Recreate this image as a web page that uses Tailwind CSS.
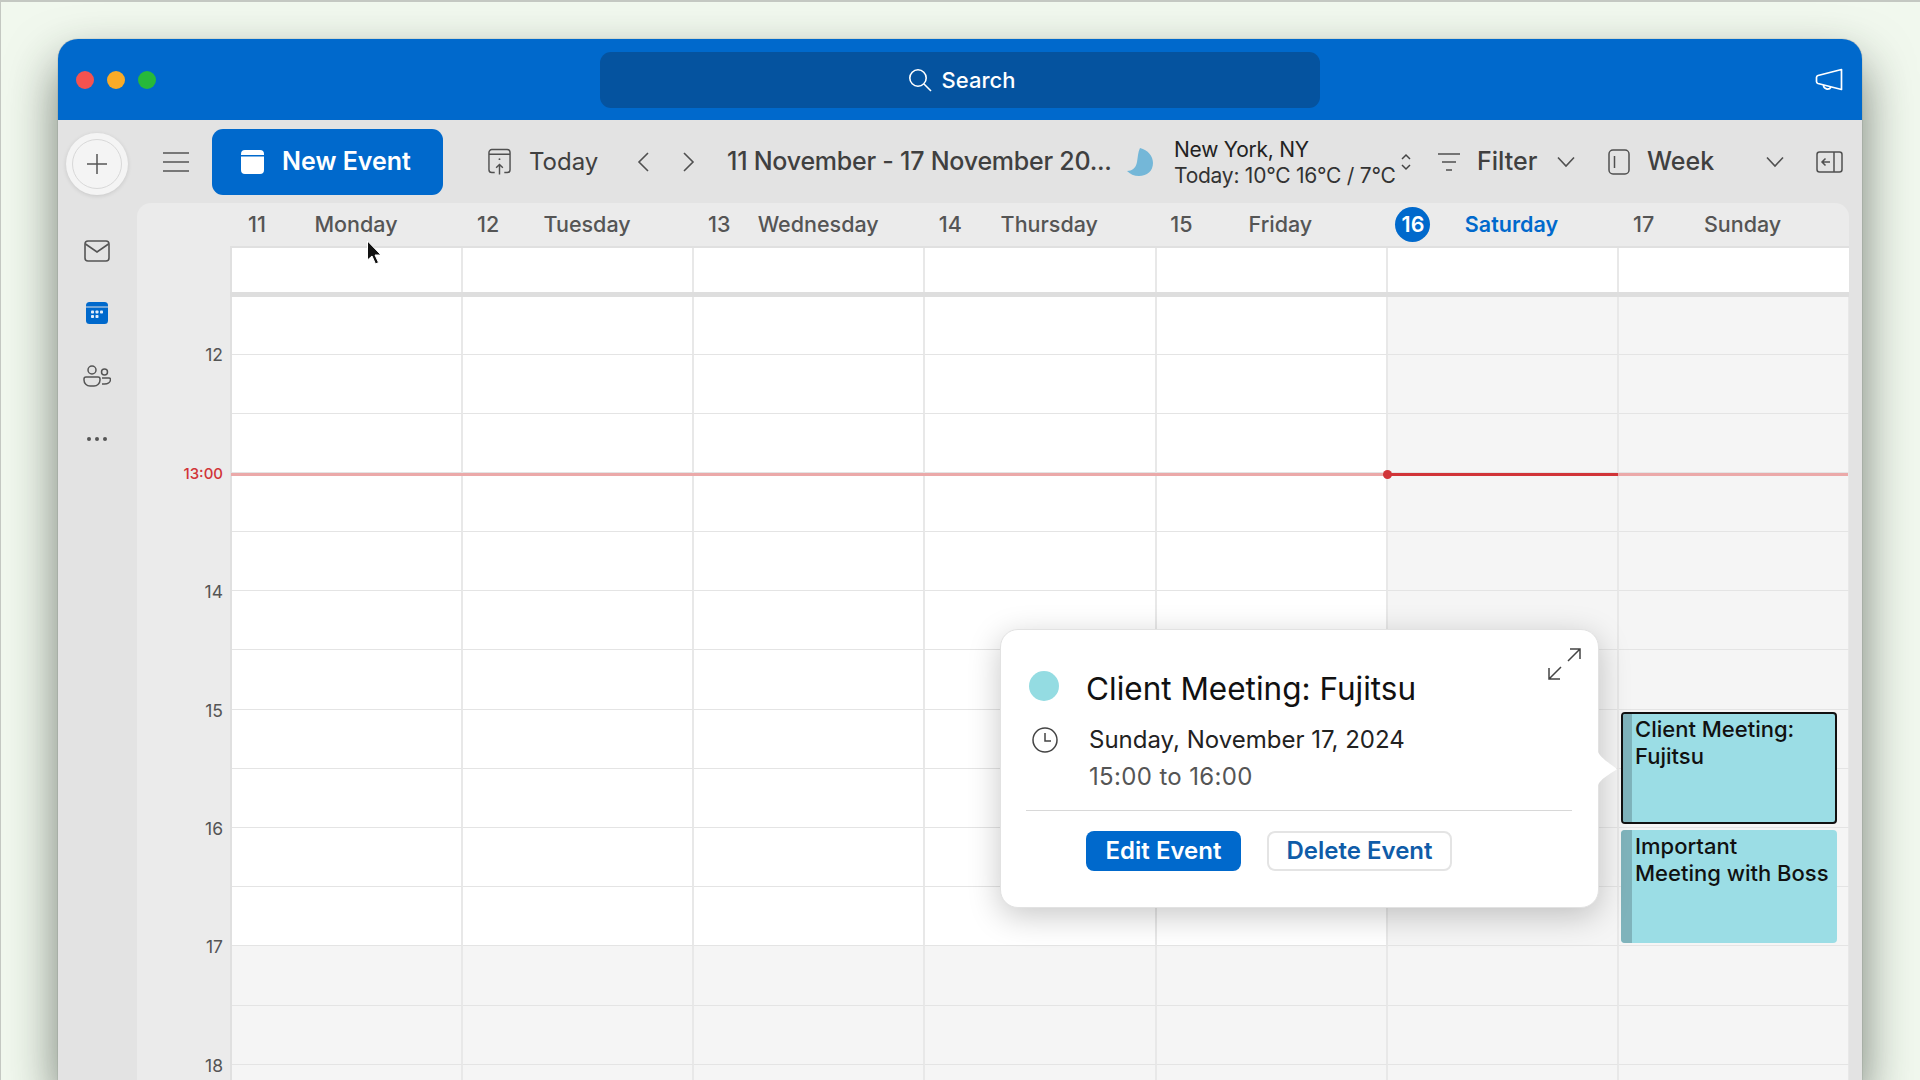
<!DOCTYPE html>
<html lang="en">
<head>
    <meta charset="UTF-8">
    <title>Calendar</title>
    <script src="https://cdn.jsdelivr.net/npm/@tailwindcss/browser@4"></script>
</head>
<body class="h-screen overflow-hidden bg-[#f1f8ee] border-t-2 border-l border-[#c4c8c2] pt-[37px] pl-[57px] pr-[58px] font-['Inter',sans-serif]">
    <div class="relative flex flex-col h-[1041px] rounded-t-[20px] overflow-hidden bg-[#e3e3e3] shadow-[0_24px_50px_rgba(30,40,30,0.6),0_0_1px_rgba(0,0,0,0.6)]">

        <!-- Title bar -->
        <div class="grid grid-cols-[1fr_720px_1fr] items-center h-[81px] shrink-0 bg-[#0069cc]">
            <div class="flex items-center gap-[13px] pl-[18px]">
                <span class="w-[18px] h-[18px] rounded-full bg-[#f5524f]"></span>
                <span class="w-[18px] h-[18px] rounded-full bg-[#f9ab27]"></span>
                <span class="w-[18px] h-[18px] rounded-full bg-[#27b93a]"></span>
            </div>
            <div class="flex items-center justify-center gap-[10px] h-[56px] mt-[1px] pl-[3px] rounded-[11px] bg-[#05539f] text-white text-[22px] font-medium">
                <svg class="w-[24px] h-[24px]" viewBox="0 0 24 24" fill="none" stroke="currentColor" stroke-width="1.6"><circle cx="10" cy="10" r="8.2"/><path d="M16 16l7 7"/></svg>
                <span>Search</span>
            </div>
            <div class="flex justify-end pr-[19px]">
                <svg class="w-[28px] h-[24px] text-white" viewBox="0 0 28 24" fill="none" stroke="currentColor" stroke-width="1.7" stroke-linejoin="round"><path d="M26.5 1.5L3 7.5Q1.5 8 1.5 9.5v4Q1.500 15 3 15.500L26.500 21.500Z"/><path d="M8.500 17a4 4 0 0 0 7.500 2"/></svg>
            </div>
        </div>

        <!-- Toolbar -->
        <div class="flex items-center h-[83px] shrink-0 text-[#404040]">
            <div class="w-[79px] shrink-0 pl-[8px]">
                <div class="flex items-center justify-center w-[62px] h-[62px] mt-[4px] rounded-full bg-[#f4f4f4] shadow-[0_1px_4px_rgba(0,0,0,0.12)]">
                    <div class="flex items-center justify-center w-[50px] h-[50px] rounded-full border border-[#d8d8d8]">
                        <svg class="w-[20px] h-[20px]" viewBox="0 0 20 20" stroke="#555" stroke-width="1.5"><path d="M10 0v20M0 10h20"/></svg>
                    </div>
                </div>
            </div>
            <svg class="ml-[26px] w-[26px] h-[22px] shrink-0" viewBox="0 0 26 22" stroke="#555" stroke-width="1.600"><path d="M0 2h26M0 11h26M0 20h26"/></svg>
            <button class="flex items-center ml-[23px] w-[231px] h-[66px] shrink-0 pl-[29px] rounded-[11px] bg-[#0069cc] text-white text-[25px] font-semibold">
                <svg class="w-[23px] h-[24px] mr-[18px]" viewBox="0 0 23 24"><path fill="#fff" d="M4 0h15a4 4 0 0 1 4 4v1H0V4a4 4 0 0 1 4-4zM0 6.500h23V20a4 4 0 0 1-4 4H4a4 4 0 0 1-4-4z"/></svg>
                <span>New Event</span>
            </button>
            <svg class="ml-[45px] w-[23px] h-[28px] shrink-0" viewBox="0 0 24 28" fill="none" stroke="#505050" stroke-width="1.500"><path d="M7 25H4a3 3 0 0 1-3-3V4a3 3 0 0 1 3-3h16a3 3 0 0 1 3 3v18a3 3 0 0 1-3 3h-3M1 6h22M12 27v-10M8.500 20l3.500-3.500 3.500 3.500"/><circle cx="12" cy="11" r="1" fill="#505050" stroke="none"/></svg>
            <span class="ml-[18px] w-[69px] shrink-0 text-[24px]">Today</span>
            <svg class="ml-[38px] w-[14px] h-[22px] shrink-0" viewBox="0 0 14 22" fill="none" stroke="#505050" stroke-width="1.600"><path d="M12 2L3 11l9 9"/></svg>
            <svg class="ml-[32px] w-[14px] h-[22px] shrink-0" viewBox="0 0 14 22" fill="none" stroke="#505050" stroke-width="1.600"><path d="M2 2l9 9-9 9"/></svg>
            <span class="ml-[31px] w-[385px] shrink-0 whitespace-nowrap text-[25px] tracking-[-0.24px] font-medium">11 November - 17 November 20...</span>
            <svg class="ml-[15px] w-[26px] h-[28px] shrink-0" viewBox="0 0 26 28"><path fill="#74b7d8" d="M13 0C21 2 26 8 26 15 26 23 20 28 12 28 7 28 3 26 0 23 5 23 9 20 10 14 11 8 11 4 13 0Z"/></svg>
            <div class="ml-[21px] w-[226px] shrink-0 mt-[2px] text-[21px] leading-[26px] tracking-[-0.25px] whitespace-nowrap">
                <div class="text-[#222]">New York, NY</div>
                <div class="text-[#333]">Today: 10°C 16°C / 7°C</div>
            </div>
            <svg class="w-[12px] h-[18px] shrink-0" viewBox="0 0 12 18" fill="none" stroke="#444" stroke-width="1.500"><path d="M2 6l4-4 4 4M2 12l4 4 4-4"/></svg>
            <svg class="ml-[26px] w-[22px] h-[20px] shrink-0" viewBox="0 0 22 20" stroke="#505050" stroke-width="1.600"><path d="M0 2h22M4 10h14M8 18h6"/></svg>
            <span class="ml-[17px] w-[59px] shrink-0 text-[25px] font-medium">Filter</span>
            <svg class="ml-[21px] w-[18px] h-[12px] shrink-0" viewBox="0 0 18 12" fill="none" stroke="#505050" stroke-width="1.600"><path d="M1 1.500l8 8.500 8-8.500"/></svg>
            <svg class="ml-[33px] w-[22px] h-[26px] shrink-0" viewBox="0 0 22 26" fill="none" stroke="#505050" stroke-width="1.500"><rect x="1" y="1" width="20" height="24" rx="4"/><path d="M6.500 7v12"/></svg>
            <span class="ml-[17px] w-[65px] shrink-0 text-[25px] font-medium">Week</span>
            <svg class="ml-[54px] w-[18px] h-[12px] shrink-0" viewBox="0 0 18 12" fill="none" stroke="#505050" stroke-width="1.600"><path d="M1 1.500l8 8.500 8-8.500"/></svg>
            <svg class="ml-[32px] w-[27px] h-[22px] shrink-0" viewBox="0 0 27 22" fill="none" stroke="#505050" stroke-width="1.500"><rect x="1" y="1" width="25" height="20" rx="2.500"/><path d="M18 1v20M14 11H6M9.500 7.500L6 11l3.500 3.500"/></svg>
        </div>

        <div class="flex flex-1 min-h-0">
            <!-- Left rail -->
            <div class="flex flex-col items-center w-[79px] shrink-0 pt-[37px] pr-[1px]">
                <svg class="w-[26px] h-[22px]" viewBox="0 0 26 22" fill="none" stroke="#555" stroke-width="1.600"><rect x="1" y="1" width="24" height="20" rx="3"/><path d="M1.500 4L13 12 24.500 4"/></svg>
                <svg class="w-[22px] h-[22px] mt-[40px]" viewBox="0 0 22 22"><rect width="22" height="22" rx="3.500" fill="#0069cc"/><path d="M0 5h22" stroke="#e3e3e3" stroke-width="1"/><g fill="#e3eefa"><rect x="5" y="8.500" width="3" height="3" rx=".8"/><rect x="9.500" y="8.500" width="3" height="3" rx=".8"/><rect x="14" y="8.500" width="3" height="3" rx=".8"/><rect x="5" y="13" width="3" height="3" rx=".8"/><rect x="9.500" y="13" width="3" height="3" rx=".8"/></g></svg>
                <svg class="w-[28px] h-[22px] mt-[41px]" viewBox="0 0 28 22" fill="none" stroke="#555" stroke-width="1.500"><circle cx="9" cy="5" r="4"/><path d="M3 12h12a2 2 0 0 1 2 2v1a6 6 0 0 1-6 6H7a6 6 0 0 1-6-6v-1a2 2 0 0 1 2-2z"/><circle cx="21.500" cy="7" r="3"/><path d="M19 13h7a1.500 1.500 0 0 1 1.500 1.500c0 3-3 4.500-6 4.500h-2.500"/></svg>
                <div class="flex gap-[4px] mt-[50px]">
                    <span class="w-[4px] h-[4px] rounded-full bg-[#555]"></span>
                    <span class="w-[4px] h-[4px] rounded-full bg-[#555]"></span>
                    <span class="w-[4px] h-[4px] rounded-full bg-[#555]"></span>
                </div>
            </div>

            <!-- Calendar -->
            <div class="flex flex-col w-[1712px] shrink-0 rounded-t-[14px] overflow-hidden bg-[#ebebeb]">
                <div class="flex h-[43px] shrink-0 pl-[94px] items-center text-[21.5px] font-medium text-[#555]">
                    <div class="flex items-center w-[231.100px]"><span class="w-[52px] text-center">11</span><span class="w-[146px] text-center">Monday</span></div>
                    <div class="flex items-center w-[231.100px]"><span class="w-[52px] text-center">12</span><span class="w-[146px] text-center">Tuesday</span></div>
                    <div class="flex items-center w-[231.100px]"><span class="w-[52px] text-center">13</span><span class="w-[146px] text-center">Wednesday</span></div>
                    <div class="flex items-center w-[231.100px]"><span class="w-[52px] text-center">14</span><span class="w-[146px] text-center">Thursday</span></div>
                    <div class="flex items-center w-[231.100px]"><span class="w-[52px] text-center">15</span><span class="w-[146px] text-center">Friday</span></div>
                    <div class="flex items-center w-[231.100px] text-[#0069cc] font-semibold"><span class="flex items-center justify-center w-[35px] h-[35px] ml-[9px] mr-[8px] rounded-full bg-[#0069cc] text-white">16</span><span class="w-[146px] text-center">Saturday</span></div>
                    <div class="flex items-center w-[231.100px]"><span class="w-[52px] text-center">17</span><span class="w-[146px] text-center">Sunday</span></div>
                </div>
                <div class="flex flex-1 min-h-0">
                    <div class="w-[93px] shrink-0 pt-[50.3px] pr-[7px] text-right text-[17.5px] text-[#555]">
                        <div class="flex items-center justify-end h-[118.4px]">12</div>
                        <div class="flex items-center justify-end h-[118.4px] text-[15px] font-medium text-[#d13438]">13:00</div>
                        <div class="flex items-center justify-end h-[118.4px]">14</div>
                        <div class="flex items-center justify-end h-[118.4px]">15</div>
                        <div class="flex items-center justify-end h-[118.4px]">16</div>
                        <div class="flex items-center justify-end h-[118.4px]">17</div>
                        <div class="flex items-center justify-end h-[118.4px]">18</div>
                    </div>
                    <div class="flex flex-col w-[1620px] shrink-0">
                        <div class="grid grid-cols-7 h-[46px] shrink-0 border-t-2 border-l-2 border-[#e0e0e0] bg-white">
                            <div class="border-r-2 border-[#e8e8e8]"></div><div class="border-r-2 border-[#e8e8e8]"></div><div class="border-r-2 border-[#e8e8e8]"></div><div class="border-r-2 border-[#e8e8e8]"></div><div class="border-r-2 border-[#e8e8e8]"></div><div class="border-r-2 border-[#e8e8e8]"></div><div></div>
                        </div>
                        <div class="h-[5px] shrink-0 bg-[#dedede]"></div>
                        <div id="slots" class="grid grid-cols-7 border-l-2 border-[#e0e0e0]"></div>
                    </div>
                </div>
            </div>
        </div>
    </div>

    <!-- Now line -->
    <div class="absolute left-[231px] top-[473px] w-[1617px] h-[3px] bg-[#eba9a9]"></div>
    <div class="absolute left-[1387px] top-[473px] w-[231px] h-[3px] bg-[#d13438]"></div>
    <div class="absolute left-[1383px] top-[470px] w-[9px] h-[9px] rounded-full bg-[#d13438]"></div>

    <!-- Events -->
    <div class="absolute left-[1621px] top-[712px] flex w-[216px] h-[112px] overflow-hidden rounded-[4px] border-2 border-[#111] bg-[#9bdde5] text-[22px] leading-[27px] font-medium text-[#111]">
        <div class="w-[9px] shrink-0 bg-[#7fb3bb]"></div>
        <div class="pl-[3px] pt-[2px]">Client Meeting:<br>Fujitsu</div>
    </div>
    <div class="absolute left-[1621px] top-[830px] flex w-[216px] h-[113px] overflow-hidden rounded-[4px] bg-[#9bdde5] text-[22px] leading-[27px] font-medium text-[#111]">
        <div class="w-[11px] shrink-0 bg-[#7fb3bb]"></div>
        <div class="pl-[3px] pt-[3px] whitespace-nowrap">Important<br>Meeting with Boss</div>
    </div>

    <!-- Event popover -->
    <div class="absolute left-[1000px] top-[629px] w-[599px] h-[279px] rounded-[18px] border border-[#e2e2e2] bg-white shadow-[0_8px_32px_rgba(0,0,0,0.22)] pl-[25px] pr-[26px] pt-[38px]">
        <svg class="absolute right-[-20px] top-[119px] w-[21px] h-[40px]" viewBox="0 0 21 40"><path fill="#fff" d="M0 0C1 8 14 15 20 20 14 25 1 30 0 40Z"/></svg>
        <svg class="absolute right-[17px] top-[17px] w-[33px] h-[33px]" viewBox="0 0 33 33" fill="none" stroke="#444" stroke-width="1.500"><path d="M22 2h10v10M32 2L20 14M1 21v11h11M1 32l12-12"/></svg>
        <div class="flex items-center h-[42px]">
            <span class="w-[30px] h-[30px] shrink-0 rounded-full bg-[#94dce2] mt-[-7px] ml-[3px]"></span>
            <span class="ml-[27px] text-[31.5px] text-[#111] whitespace-nowrap">Client Meeting: Fujitsu</span>
        </div>
        <div class="flex mt-[11px]">
            <svg class="w-[26px] h-[26px] shrink-0 ml-[6px] mt-[6px]" viewBox="0 0 26 26" fill="none" stroke="#444" stroke-width="1.500"><circle cx="13" cy="13" r="12"/><path d="M13 6v8h6"/></svg>
            <div class="ml-[31px] text-[24px] leading-[37px]">
                <div class="text-[#222]">Sunday, November 17, 2024</div>
                <div class="text-[#555] tracking-[0.35px]">15:00 to 16:00</div>
            </div>
        </div>
        <div class="h-[1px] mt-[15px] bg-[#d8d8d8]"></div>
        <div class="flex gap-[26px] mt-[20px] ml-[60px]">
            <button class="w-[155px] h-[40px] rounded-[8px] bg-[#0069cc] text-white text-[24px] font-semibold">Edit Event</button>
            <button class="w-[185px] h-[40px] rounded-[8px] border-2 border-[#e4e4e4] bg-white text-[#0f5ca8] text-[24px] font-semibold">Delete Event</button>
        </div>
    </div>

    <!-- Mouse pointer -->
    <svg class="absolute left-[366px] top-[240px] w-[18px] h-[26px]" viewBox="0 0 18 26"><path d="M1.500 1v19l4.500-4 3.500 8 3-1.500-3.500-7.500H15Z" fill="#111" stroke="#fff" stroke-width="1"/></svg>

    <script>
        // half-hour slots, weekdays go grey after 17:00
        const slots = document.getElementById('slots');
        let html = '';
        for (let r = 0; r < 14; r++) {
            for (let c = 0; c < 7; c++) {
                const grey = c >= 5 || r > 10;
                const height = r === 0 ? 'h-[57.5px]' : 'h-[59.2px]';
                html += `<div class="${height} border-r-2 border-b border-r-[#e8e8e8] border-b-[#e4e4e4] ${grey ? 'bg-[#f5f5f5]' : 'bg-white'}"></div>`;
            }
        }
        slots.innerHTML = html;
    </script>
</body>
</html>
